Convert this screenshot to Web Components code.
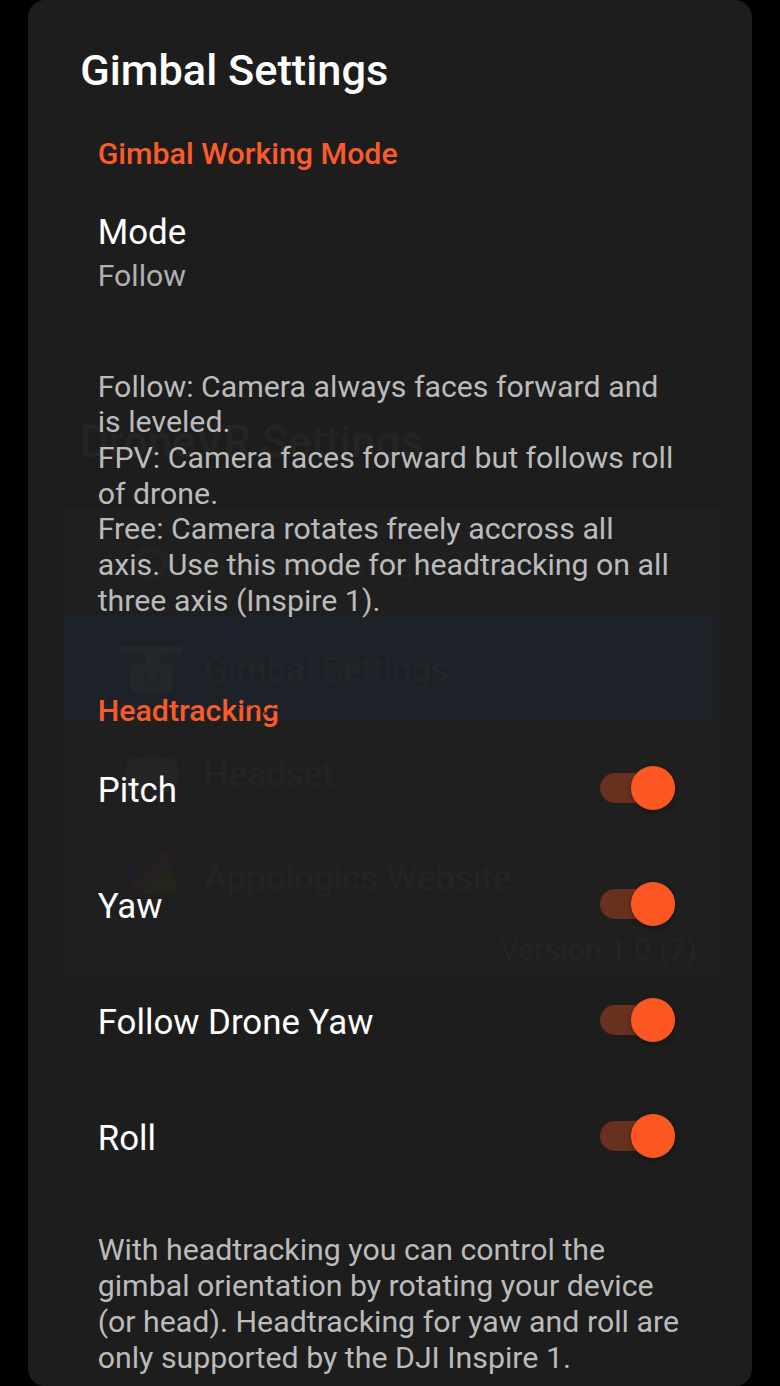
<!DOCTYPE html>
<html lang="en">
<head>
<meta charset="utf-8">
<title>Gimbal Settings</title>
<style>
html, body { margin: 0; background: #000; }
body { width: 780px; height: 1386px; overflow: hidden; font-family: Roboto, "Liberation Sans", sans-serif; color: #fff; }
</style>
</head>
<body>
<settings-dialog heading="Gimbal Settings">
  <menu-backdrop slot="backdrop"></menu-backdrop>
  <pref-category style="margin-top:40px">Gimbal Working Mode</pref-category>
  <pref-value style="margin-top:40px" label="Mode">Follow</pref-value>
  <pref-note style="margin-top:74.600px">Follow: Camera always faces forward and<br>is leveled.<br>FPV: Camera faces forward but follows roll<br>of drone.<br>Free: Camera rotates freely accross all<br>axis. Use this mode for headtracking on all<br>three axis (Inspire 1).</pref-note>
  <pref-category worn style="margin-top:74.900px">Headtracking</pref-category>
  <div style="height:2px"></div>
  <pref-switch>Pitch</pref-switch>
  <pref-switch>Yaw</pref-switch>
  <pref-switch>Follow Drone Yaw</pref-switch>
  <pref-switch>Roll</pref-switch>
  <pref-note style="margin-top:37px">With headtracking you can control the<br>gimbal orientation by rotating your device<br>(or head). Headtracking for yaw and roll are<br>only supported by the DJI Inspire 1.</pref-note>
</settings-dialog>
<script>
const define = (name, html, setup) => customElements.define(name, class extends HTMLElement {
  constructor() {
    super();
    this.attachShadow({ mode: 'open' }).innerHTML = html;
  }
  connectedCallback() { if (setup) setup(this, this.shadowRoot); }
});

define('settings-dialog', `
<style>
:host { display: grid; box-sizing: border-box; width: 724px; height: 1386px; margin-left: 28px; background: #1d1d1d; border-radius: 17px; overflow: hidden; }
.layer { grid-area: 1 / 1; min-width: 0; }
.content { position: relative; padding-top: 46px; }
h1 { margin: 0 0 0 52.300px; font-size: 43.300px; font-weight: 500; line-height: 50px; white-space: nowrap; }
.list { display: flex; flex-direction: column; padding: 0 76px 0 69.700px; }
</style>
<div class="layer"><slot name="backdrop"></slot></div>
<div class="layer content"><h1></h1><div class="list"><slot></slot></div></div>`,
(el, root) => { root.querySelector('h1').textContent = el.getAttribute('heading'); });

define('pref-category', `
<style>
:host { display: block; position: relative; color: #fb5b29; font-size: 30.350px; font-weight: 500; line-height: 36px; white-space: nowrap; }
svg { display: none; position: absolute; left: 136px; top: 6px; }
:host([worn]) svg { display: block; }
</style>
<slot></slot>
<svg width="48" height="24" viewBox="0 0 48 24" fill="none" stroke="#1d2127" stroke-linecap="round">
<path d="M3 7l3 2M10 7h5" stroke-width="1.2"/><path d="M20 8.500l3 2M28 8l2 5M31 15l4-2" stroke-width="1.700"/><path d="M34 11.500q5-2 10 0" stroke-width="2.400"/><path d="M11 9v10M18.500 12v8" stroke-width=".9" opacity=".7"/>
</svg>`);

define('pref-value', `
<style>
:host { display: block; }
.label { font-size: 34.900px; line-height: 41px; }
.value { margin-top: 5px; font-size: 30.250px; line-height: 36px; color: #b0b0b0; }
</style>
<div class="label"></div><div class="value"><slot></slot></div>`,
(el, root) => { root.querySelector('.label').textContent = el.getAttribute('label'); });

define('pref-note', `
<style>:host { display: block; font-size: 30.300px; line-height: 35.700px; color: #bbb; white-space: nowrap; }</style>
<slot></slot>`);

define('pref-switch', `
<style>
:host { display: flex; align-items: center; justify-content: space-between; height: 116px; font-size: 34.850px; line-height: 41px; }
.label { padding-top: 2px; }
.track { position: relative; width: 75px; height: 30.4px; margin: 0 1px 2.600px 0; }
.track::before { content: ""; position: absolute; inset: 0 14px 0 0; border-radius: 15.2px; background: #68301e; }
.thumb { position: absolute; right: 0; top: -6.600px; width: 43.600px; height: 43.600px; border-radius: 50%; background: #fc5722; box-shadow: 0 2px 5px rgba(0,0,0,.3); }
</style>
<span class="label"><slot></slot></span><div class="track"><div class="thumb"></div></div>`);

define('menu-backdrop', `
<style>
:host { display: block; padding: 418px 32px 0 36px; color: #242424; }
.title { margin-left: 16px; font-size: 43.500px; font-weight: 500; line-height: 50px; white-space: nowrap; }
.card { box-sizing: border-box; height: 468px; margin-top: 41px; padding-top: 4px; background: #1f1f1f; }
.faint { color: #222; }
.version { margin-right: 23px; padding-top: 3px; text-align: right; font-size: 30.400px; line-height: 36px; }
svg { display: block; }
</style>
<div class="title">DroneVR Settings</div>
<div class="card">
<menu-row class="faint" label="Drone Settings"><svg width="64" height="64" viewBox="0 0 64 64" fill="none" stroke="#232323" stroke-width="7"><circle cx="31" cy="30" r="14"/></svg></menu-row>
<menu-row selected label="Gimbal Settings"><svg width="64" height="64" viewBox="0 0 64 64" fill="#23272a"><path d="M1 9h61v7H50q-9 2-11 8v3h11q2 0 2 3v21q0 4-4 4H15q-4 0-4-4V30q0-3 3-3h12v-3q-2-6-9-8H1z"/><circle cx="32" cy="42" r="8" fill="none" stroke="#1f2428" stroke-width="2"/></svg></menu-row>
<menu-row label="Headset"><svg width="64" height="64" viewBox="0 0 64 64" fill="#242424"><path d="M8 18q24-5 48 0l2 8v18q-2 7-9 7h-8q-4-8-9-8t-9 8h-8q-7 0-9-7V26z"/><path d="M0 21h3v16H0zM61 21h3v16h-3z" opacity=".5"/></svg></menu-row>
<menu-row label="Appologics Website"><svg width="64" height="64" viewBox="0 0 64 64"><path d="M11 38L44 6q5-2 6 4v12L20 48q-9-1-9-10z" fill="#271e21"/><path d="M19 49l30-27 10 22-4 6z" fill="#23241c"/><path d="M7 15l7-6 2 21-8 8z" fill="#1d1f24"/></svg></menu-row>
<div class="version">Version 1.0 (7)</div>
</div>`);

define('menu-row', `
<style>
:host { display: flex; align-items: center; gap: 20px; box-sizing: border-box; height: 104px; padding-left: 56px; font-size: 34.800px; line-height: 41px; }
:host([selected]) { margin-right: 2px; background: #1d2128; color: #212629; }
span { padding-top: 2px; }
</style>
<slot></slot><span></span>`,
(el, root) => { root.querySelector('span').textContent = el.getAttribute('label'); });
</script>
</body>
</html>
